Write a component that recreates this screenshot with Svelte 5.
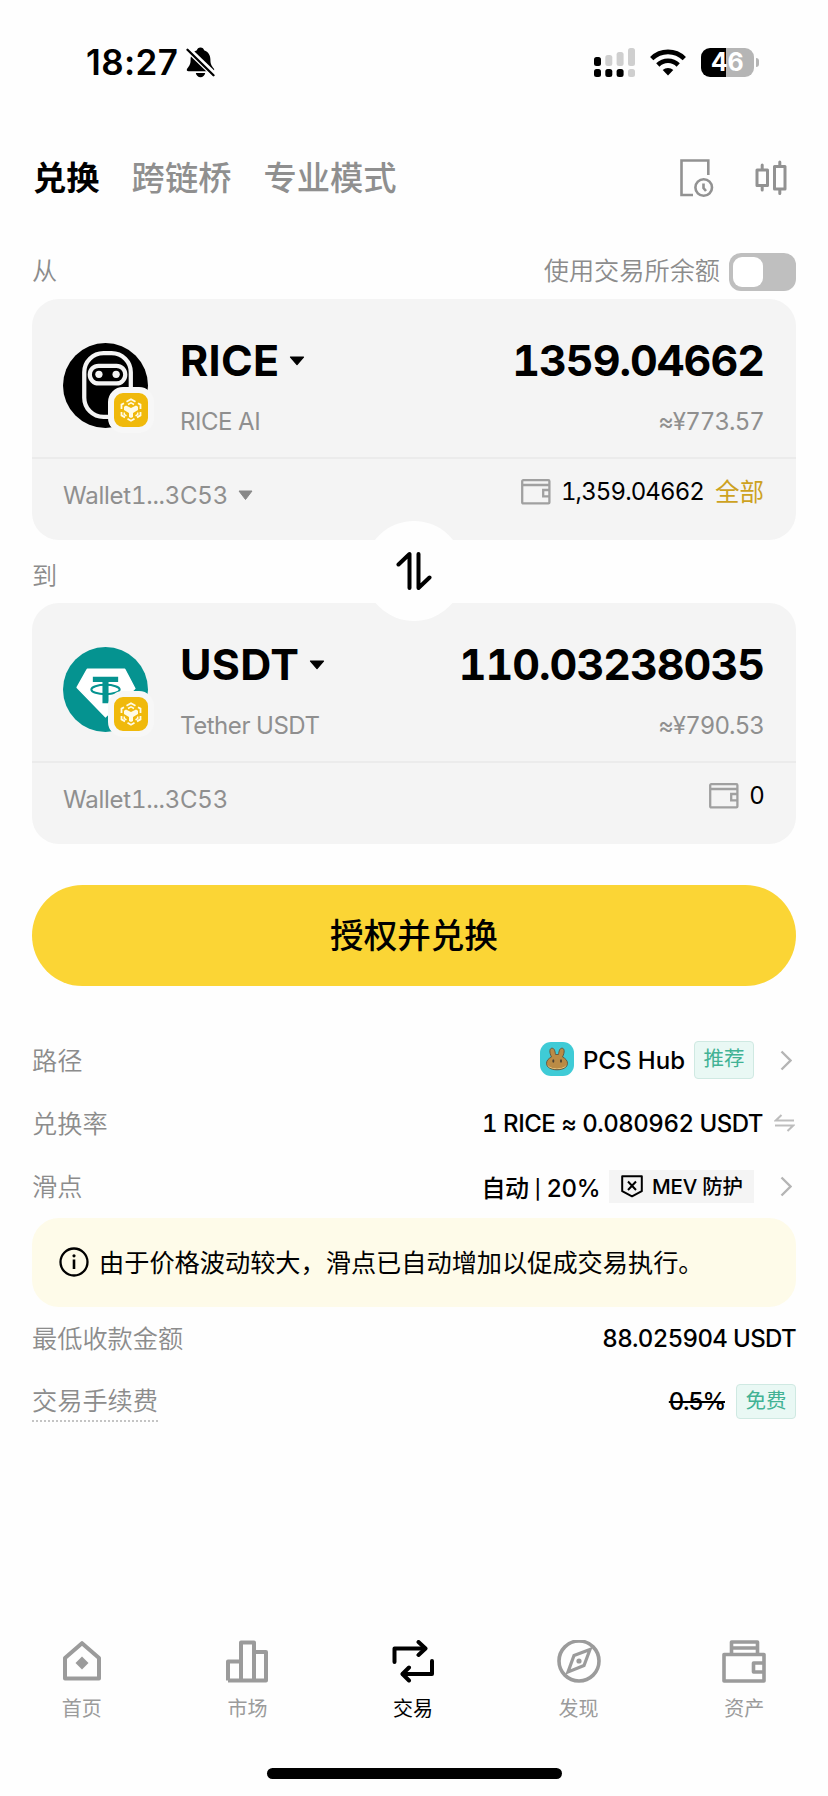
<script>
	const tokens = [
		{ side: 'from', symbol: 'RICE', name: 'RICE AI', amount: '1359.04662', fiat: '≈¥773.57', balance: '1,359.04662', max: true },
		{ side: 'to', symbol: 'USDT', name: 'Tether USDT', amount: '110.03238035', fiat: '≈¥790.53', balance: '0', max: false }
	];
	const nav = [
		{ id: 'home', label: '首页' },
		{ id: 'market', label: '市场' },
		{ id: 'trade', label: '交易' },
		{ id: 'discover', label: '发现' },
		{ id: 'assets', label: '资产' }
	];
	const active = 'trade';
	let useExchange = false;
</script>

<div class="screen">
	<header class="status">
		<div class="clock">
			<span class="time">18:27</span>
			<svg width="29" height="31" viewBox="0 0 29 31">
				<path d="M14.5 0.5c-2 0-3.300 1.300-3.600 2.800C6.500 4.800 4.600 8.500 4.600 12.500c0 5-1.300 6.300-3.200 8.800-1.300 1.700-0.500 3 1.200 3h23.800c1.700 0 2.500-1.300 1.200-3-1.900-2.500-3.200-3.800-3.200-8.800 0-4-1.900-7.700-6.300-9.200C17.800 1.800 16.500 0.500 14.500 0.500zM9.800 26h9.400c-0.500 2.500-2.400 4.200-4.700 4.200s-4.200-1.700-4.700-4.200z" />
				<path d="M1 1.500l27 26" stroke="#fff" stroke-width="6" />
				<path d="M1.500 2.800l26 25.500" stroke="#000" stroke-width="2.300" stroke-linecap="round" />
			</svg>
		</div>
		<div class="signals">
			<svg width="41" height="29" viewBox="0 0 41 29">
				<g fill="#cfcfcf">
					<rect x="11.300" y="7" width="7" height="11" rx="2.500" />
					<rect x="22.600" y="4" width="7" height="14" rx="2.500" />
					<rect x="34" y="0" width="7" height="18" rx="2.500" />
					<rect x="34" y="21" width="7" height="8" rx="2.500" />
				</g>
				<rect x="0" y="9" width="7" height="9" rx="2.500" />
				<rect x="0" y="21" width="7" height="8" rx="2.500" />
				<rect x="11.300" y="21" width="7" height="8" rx="2.500" />
				<rect x="22.600" y="21" width="7" height="8" rx="2.500" />
			</svg>
			<svg class="wifi" width="36" height="27" viewBox="0 0 36 27">
				<g fill="none" stroke="#000" stroke-width="4.600">
					<path d="M1.700 9.600a23.200 23.200 0 0 1 32.600 0" />
					<path d="M7.800 16a14.500 14.500 0 0 1 20.400 0" />
				</g>
				<path d="M18 26.500l-5.300-5.400a7.500 7.500 0 0 1 10.600 0z" />
			</svg>
			<div class="battery"><span>46</span></div>
			<i class="nub"></i>
		</div>
	</header>

	<div class="tabs">
		<span class="tab on">兑换</span>
		<span class="tab">跨链桥</span>
		<span class="tab">专业模式</span>
		<div class="tools">
			<svg width="34" height="39" viewBox="0 0 34 39" fill="none" stroke="#929292" stroke-width="2.600">
				<path d="M13 36H1.500V1.500h26.800V16" />
				<circle cx="23.700" cy="28.500" r="8.300" />
				<path d="M23.500 24.500v4.500l2.500 3" />
			</svg>
			<svg width="32" height="36" viewBox="0 0 32 36" fill="none" stroke="#929292" stroke-width="3" stroke-linecap="round" stroke-linejoin="round">
				<path d="M2 10h10.500v15.500H2zM7.200 5v5M7.200 25.500V30M19.500 6.500H30v22.500H19.500zM24.800 2v4.500M24.800 29v4.500" />
			</svg>
		</div>
	</div>

	<div class="side-label">
		<span class="cjk">从</span>
		<div class="exchange">
			<span class="cjk">使用交易所余额</span>
			<button class="toggle" class:checked={useExchange} aria-label="使用交易所余额" on:click={() => (useExchange = !useExchange)}></button>
		</div>
	</div>

	{#each tokens as token}
		<section class="card">
			<div class="main">
				<div class="coin">
					{#if token.side === 'from'}
						<svg width="85" height="85" viewBox="0 0 84 84" fill="none">
							<circle cx="42" cy="42" r="42" fill="#000" />
							<rect x="21" y="10" width="46" height="63" rx="19" stroke="#f4f4f4" stroke-width="4.200" />
							<rect x="26.500" y="22.500" width="35" height="17.500" rx="8.700" stroke="#f4f4f4" stroke-width="4.200" />
							<circle cx="35.500" cy="31" r="3.600" fill="#f4f4f4" />
							<circle cx="52.500" cy="31" r="3.600" fill="#f4f4f4" />
						</svg>
					{:else}
						<svg width="85" height="85" viewBox="0 0 84 84">
							<circle cx="42" cy="42" r="42" fill="#059390" />
							<path d="M24 22h37l10 19-29 28-28-29z" fill="#fff" stroke="#fff" stroke-width="1.500" stroke-linejoin="round" />
							<path d="M29.500 29.500h25v5h-9.500v21h-6v-21h-9.500z" fill="#059390" />
							<ellipse cx="42" cy="42" rx="14" ry="4.600" fill="none" stroke="#059390" stroke-width="2" />
						</svg>
					{/if}
					<div class="chain">
						<svg width="34" height="34" viewBox="0 0 34 34" fill="none" stroke="#fffbe6" stroke-width="1.800">
							<path d="M12.500 8.800L17 6.200l4.500 2.600M24 10.200l2.500 1.400v4.400M26.500 19v3.400l-3.500 2M20.500 25.800L17 27.800l-3.500-2M11 24.400l-3.500-2V19M7.500 16v-4.400L10 10.200" />
							<path d="M14 11.500l3-1.700 3 1.700M10.300 19.500v2l2.200 1.300M23.700 19.500v2l-2.200 1.300" stroke-width="1.500" />
							<path d="M12 12.500l5 2.600 5-2.600 2 1.200v3.200l-5 3v4.100l-2 1.100-2-1.100v-4.100l-5-3v-3.200z" fill="#fffbe6" stroke="none" />
						</svg>
					</div>
				</div>
				<div class="name">
					<div class="symbol">
						<span>{token.symbol}</span>
						<svg width="16" height="10" viewBox="0 0 16 10"><path d="M1.500 1h13L8 8.600z" stroke="#000" stroke-width="1.200" stroke-linejoin="round" /></svg>
					</div>
					<div class="sub">{token.name}</div>
				</div>
				<div class="value">
					<div class="amount">{token.amount}</div>
					<div class="sub fiat">{token.fiat}</div>
				</div>
			</div>
			<div class="foot">
				<span class="wallet">Wallet1...3C53</span>
				{#if token.max}
					<svg class="pick" width="15" height="11" viewBox="0 0 15 11"><path d="M1 1h13L7.500 9.500z" fill="#888" stroke="#888" stroke-linejoin="round" /></svg>
				{/if}
				<div class="balance">
					<svg width="30" height="26" viewBox="0 0 30 26" fill="none" stroke="#a0a0a0" stroke-width="2.300">
						<rect x="1.200" y="1.200" width="27.200" height="23.200" rx="1" />
						<path d="M1 6h27.500M28.500 11h-6.300v6.300h6.300" />
					</svg>
					<span class="num">{token.balance}</span>
					{#if token.max}<span class="all">全部</span>{/if}
				</div>
			</div>
		</section>
		{#if token.side === 'from'}
			<div class="between">
				<span>到</span>
				<div class="swap">
					<svg width="36" height="40" viewBox="0 0 36 40" fill="none" stroke="#000" stroke-width="4" stroke-linecap="round" stroke-linejoin="round">
						<path d="M2.500 13.500L13.500 3v34M22.500 3v34L33.500 26.500" />
					</svg>
				</div>
			</div>
		{/if}
	{/each}

	<button class="confirm">授权并兑换</button>

	<div class="row">
		<span class="label">路径</span>
		<div class="detail">
			<svg class="pcs" width="34" height="34" viewBox="0 0 34 34">
				<rect width="34" height="34" rx="11" fill="#3fcbd6" />
				<path d="M11.500 15C9 10 9.500 6.200 12 6.200s3 3 3.500 6.300h3c0.500-3.300 1-6.300 3.500-6.300s3 3.800 0.500 8.800c3 1.500 5 3.600 5 6.300 0 4-4.500 6.500-10.500 6.500S6.500 25.300 6.500 21.300c0-2.700 2-4.800 5-6.300z" fill="#bb8b45" stroke="#63513b" stroke-width="0.900" />
				<path d="M7.500 22.500c2 5.500 17 5.500 19 0-0.500 6-18.500 6-19 0z" fill="#fbe39c" />
				<ellipse cx="13.300" cy="19" rx="1" ry="1.700" fill="#4c4033" />
				<ellipse cx="21" cy="19" rx="1" ry="1.700" fill="#4c4033" />
			</svg>
			<span class="strong hub">PCS Hub</span>
			<span class="tag route">推荐</span>
			<svg class="chevron" width="12" height="21" viewBox="0 0 12 21"><path d="M1.500 1.500l9 9-9 9" /></svg>
		</div>
	</div>
	<div class="row">
		<span class="label">兑换率</span>
		<div class="detail">
			<span class="strong rate">1 RICE ≈ 0.080962 USDT</span>
			<svg class="flip" width="21" height="18" viewBox="0 0 21 18" fill="none" stroke="#bdbdbd" stroke-width="2"><path d="M7.500 1L1.800 6.500H20M1 11.500h18.200L13.500 17" /></svg>
		</div>
	</div>
	<div class="row">
		<span class="label">滑点</span>
		<div class="detail">
			<span class="strong slip">自动 <i class="sep">|</i> 20%</span>
			<span class="mev">
				<svg width="22" height="23" viewBox="0 0 22 23" fill="none" stroke="#000" stroke-width="2"><path d="M1.200 1.200h19.600v15L11 21.300 1.200 16.200zM7 6.500l8 8.500M15 6.500L7 15" stroke-linejoin="round" /></svg>
				<span>MEV 防护</span>
			</span>
			<svg class="chevron" width="12" height="21" viewBox="0 0 12 21"><path d="M1.500 1.500l9 9-9 9" /></svg>
		</div>
	</div>

	<div class="notice">
		<svg width="30" height="30" viewBox="0 0 30 30" fill="none" stroke="#000" stroke-width="2.300"><circle cx="15" cy="15" r="13.500" /><path d="M15 12.500V22" stroke-width="2.600" /><circle cx="15" cy="8.800" r="1.600" fill="#000" stroke="none" /></svg>
		<span>由于价格波动较大，滑点已自动增加以促成交易执行。</span>
	</div>

	<div class="row">
		<span class="label">最低收款金额</span>
		<div class="detail"><span class="strong min">88.025904 USDT</span></div>
	</div>
	<div class="row">
		<span class="label dotted">交易手续费</span>
		<div class="detail"><span class="strong fee">0.5%</span><span class="tag free">免费</span></div>
	</div>

	<nav>
		{#each nav as item}
			<div class="item" class:active={item.id === active}>
				<svg width="44" height="44" viewBox="0 0 44 44" fill="none" stroke="currentColor" stroke-width="4" stroke-linejoin="round">
					{#if item.id === 'home'}
						<path d="M22 3.200L39 18v20.500H5V18z" />
						<path d="M22 16.500l6.500 6.500-6.500 6.500-6.500-6.500z" fill="currentColor" stroke="none" />
					{:else if item.id === 'market'}
						<path d="M3 40.500v-19h13M16 40.500v-38h13v38M29 12h12v28.500H3" />
					{:else if item.id === 'trade'}
						<path d="M3.500 22V8.500H34M41 21v13H12" stroke-linecap="round" />
						<path d="M27.500 2l7 6.500-7 6.500M18 27.500l-6.500 6.500 6.500 6.500" stroke-linecap="round" />
					{:else if item.id === 'discover'}
						<circle cx="22" cy="21" r="20" stroke-width="3.600" />
						<path d="M33 9.500l-6 16-16 6.500 6-16.500z" stroke-width="3.200" stroke-linejoin="miter" />
						<circle cx="22" cy="21" r="2.600" fill="currentColor" stroke="none" />
					{:else}
						<path d="M2 14.500h40v26.500H2zM9.500 14V2h26v12M10 8h25M42 23h-10.500v9H42" stroke-width="3.600" />
					{/if}
				</svg>
				<span>{item.label}</span>
			</div>
		{/each}
	</nav>
	<div class="home-bar"></div>
</div>

<style>
	:global(body) {
		background: #fefefe;
	}
	.screen {
		width: 828px;
		height: 1796px;
		box-sizing: border-box;
		padding: 0 32px;
		display: flex;
		flex-direction: column;
		overflow: hidden;
		font-family: Inter, "Noto Sans CJK SC", sans-serif;
		font-variant-numeric: tabular-nums;
		color: #000;
		white-space: nowrap;
	}
	svg {
		display: block;
		flex: none;
	}
	button {
		border: 0;
		padding: 0;
		font: inherit;
		color: inherit;
	}
	.status {
		height: 124px;
		display: flex;
		align-items: center;
		justify-content: space-between;
		padding: 0 37px 0 54px;
	}
	.clock, .signals {
		display: flex;
		align-items: center;
	}
	.time {
		font-size: 35px;
		font-weight: 600;
		font-variant-numeric: normal;
		letter-spacing: 0.4px;
		width: 100px;
	}
	.wifi {
		margin: 0 15px;
	}
	.battery {
		width: 53px;
		height: 29px;
		border-radius: 9px;
		background: linear-gradient(90deg, #000 47%, #b5b5b5 47%);
		color: #fff;
		font-size: 25px;
		line-height: 29px;
		font-weight: 700;
		text-align: center;
	}
	.nub {
		width: 3px;
		height: 9px;
		margin-left: 2px;
		border-radius: 0 4px 4px 0;
		background: #b5b5b5;
	}
	.tabs {
		height: 108px;
		display: flex;
		align-items: center;
		gap: 32px;
		font-size: 33.300px;
		font-weight: 500;
		padding: 0 9px 0 1px;
	}
	.tab {
		color: #8f8f8f;
		padding-bottom: 6px;
	}
	.tab.on {
		color: #000;
		font-weight: 700;
	}
	.tools {
		margin-left: auto;
		display: flex;
		align-items: center;
		gap: 41px;
	}
	.side-label, .between {
		box-sizing: border-box;
		display: flex;
		align-items: center;
		color: #8c8c8c;
		font-size: 25.200px;
		font-weight: 350;
	}
	.side-label {
		height: 67px;
		justify-content: space-between;
		padding-top: 12px;
	}
	.cjk {
		padding-bottom: 5px;
	}
	.exchange {
		display: flex;
		align-items: center;
		gap: 9px;
	}
	.toggle {
		width: 67px;
		height: 38px;
		border-radius: 12px;
		background: #bfbfbf;
		padding: 4px;
		display: flex;
	}
	.toggle::before {
		content: "";
		width: 30px;
		height: 30px;
		border-radius: 9px;
		background: #fff;
	}
	.toggle.checked {
		justify-content: flex-end;
	}
	.card {
		height: 241px;
		flex: none;
		border-radius: 27px;
		background: #f4f4f4;
	}
	.main {
		height: 160px;
		box-sizing: border-box;
		border-bottom: 2px solid #ebebeb;
		padding: 0 32px 0 31px;
		display: flex;
	}
	.coin {
		position: relative;
		width: 84px;
		height: 84px;
		margin-top: 44px;
	}
	.chain {
		position: absolute;
		left: 45px;
		top: 44px;
		border: 6px solid #f7f7f7;
		border-radius: 15px;
		background: #f0b90b;
	}
	.name {
		margin-left: 33px;
	}
	.symbol {
		display: flex;
		align-items: center;
		gap: 10px;
		letter-spacing: 0.3px;
	}
	.symbol, .amount {
		font-size: 43px;
		font-weight: 700;
		line-height: 52px;
		height: 52px;
		margin-top: 35px;
	}
	.symbol svg {
		margin-top: 1px;
	}
	.amount {
		letter-spacing: -1px;
		text-align: right;
	}
	.value {
		margin-left: auto;
	}
	.sub {
		font-size: 24px;
		line-height: 30px;
		margin-top: 21px;
		color: #8f8f8f;
		letter-spacing: -0.450px;
	}
	.fiat {
		text-align: right;
		letter-spacing: -0.900px;
	}
	.foot {
		height: 81px;
		display: flex;
		align-items: center;
		padding: 0 32px 16px 31px;
		box-sizing: border-box;
		font-size: 24px;
	}
	.wallet {
		color: #8f8f8f;
		padding-top: 8px;
		letter-spacing: -0.250px;
	}
	.pick {
		margin: 7px 0 0 10px;
	}
	.balance {
		margin-left: auto;
		display: flex;
		align-items: center;
	}
	.num {
		margin-left: 10px;
		letter-spacing: -0.900px;
	}
	.all {
		margin-left: 11px;
		font-size: 24.500px;
		line-height: 30px;
		color: #cda21f;
	}
	.between {
		height: 63px;
		flex: none;
		position: relative;
		padding-top: 4px;
	}
	.swap {
		position: absolute;
		left: 332px;
		top: -19px;
		width: 100px;
		height: 100px;
		border-radius: 50%;
		background: #fefefe;
		display: flex;
		align-items: center;
		justify-content: center;
	}
	.confirm {
		height: 101px;
		flex: none;
		margin: 41px 0;
		padding-bottom: 4px;
		border-radius: 51px;
		background: #fbd535;
		font-size: 33.600px;
		font-weight: 500;
	}
	.row {
		height: 63.300px;
		flex: none;
		display: flex;
		align-items: center;
		justify-content: space-between;
	}
	.label {
		color: #8c8c8c;
		font-size: 25.200px;
		font-weight: 350;
	}
	.dotted {
		padding-top: 5px;
		border-bottom: 2px dotted #c4c4c4;
		line-height: 37px;
	}
	.detail {
		display: flex;
		align-items: center;
		padding-top: 3px;
	}
	.strong {
		font-size: 24px;
		font-weight: 500;
	}
	.pcs {
		margin-top: -3px;
	}
	.hub {
		margin: 0 9px 0 9px;
	}
	.rate {
		letter-spacing: -0.500px;
	}
	.slip {
		letter-spacing: -0.500px;
	}
	.sep {
		font-style: normal;
		font-size: 19px;
		vertical-align: 1px;
	}
	.min {
		letter-spacing: -0.650px;
	}
	.tag {
		box-sizing: border-box;
		width: 60px;
		border: 1px solid #cfe9e2;
		border-radius: 4px;
		background: #e9f8f4;
		color: #41b294;
		font-size: 20.500px;
		text-align: center;
	}
	.route {
		height: 38px;
		line-height: 34px;
	}
	.chevron {
		fill: none;
		stroke: #b5b5b5;
		stroke-width: 2.400;
		margin: 0 4px 0 26px;
	}
	.flip {
		margin: 0 1px 0 11px;
	}
	.mev {
		display: flex;
		align-items: center;
		gap: 9px;
		width: 145px;
		height: 33px;
		box-sizing: border-box;
		padding-left: 12px;
		margin-left: 9px;
		background: #f4f4f4;
		font-size: 20.500px;
		font-weight: 500;
	}
	.mev span {
		line-height: 33px;
		letter-spacing: -0.200px;
	}
	.notice {
		height: 89px;
		flex: none;
		display: flex;
		align-items: center;
		gap: 10px;
		margin: 1px 0 -2px;
		padding-left: 27px;
		border-radius: 27px;
		background: #fefbe9;
		font-size: 25.200px;
	}
	.notice span {
		padding-bottom: 2px;
	}
	.fee {
		letter-spacing: -1.300px;
		text-decoration: line-through;
		text-decoration-thickness: 2px;
	}
	.free {
		height: 35px;
		line-height: 32px;
		margin-left: 11px;
	}
	nav {
		display: grid;
		grid-template-columns: repeat(5, 1fr);
		margin: auto -31px 0 -33px;
	}
	.item {
		display: flex;
		flex-direction: column;
		align-items: center;
		gap: 10px;
		color: #9b9b9b;
		font-size: 20px;
		line-height: 30px;
	}
	.item.active {
		color: #000;
	}
	.home-bar {
		width: 295px;
		height: 11px;
		flex: none;
		border-radius: 6px;
		background: #000;
		margin: 44px auto 17px;
	}
</style>
